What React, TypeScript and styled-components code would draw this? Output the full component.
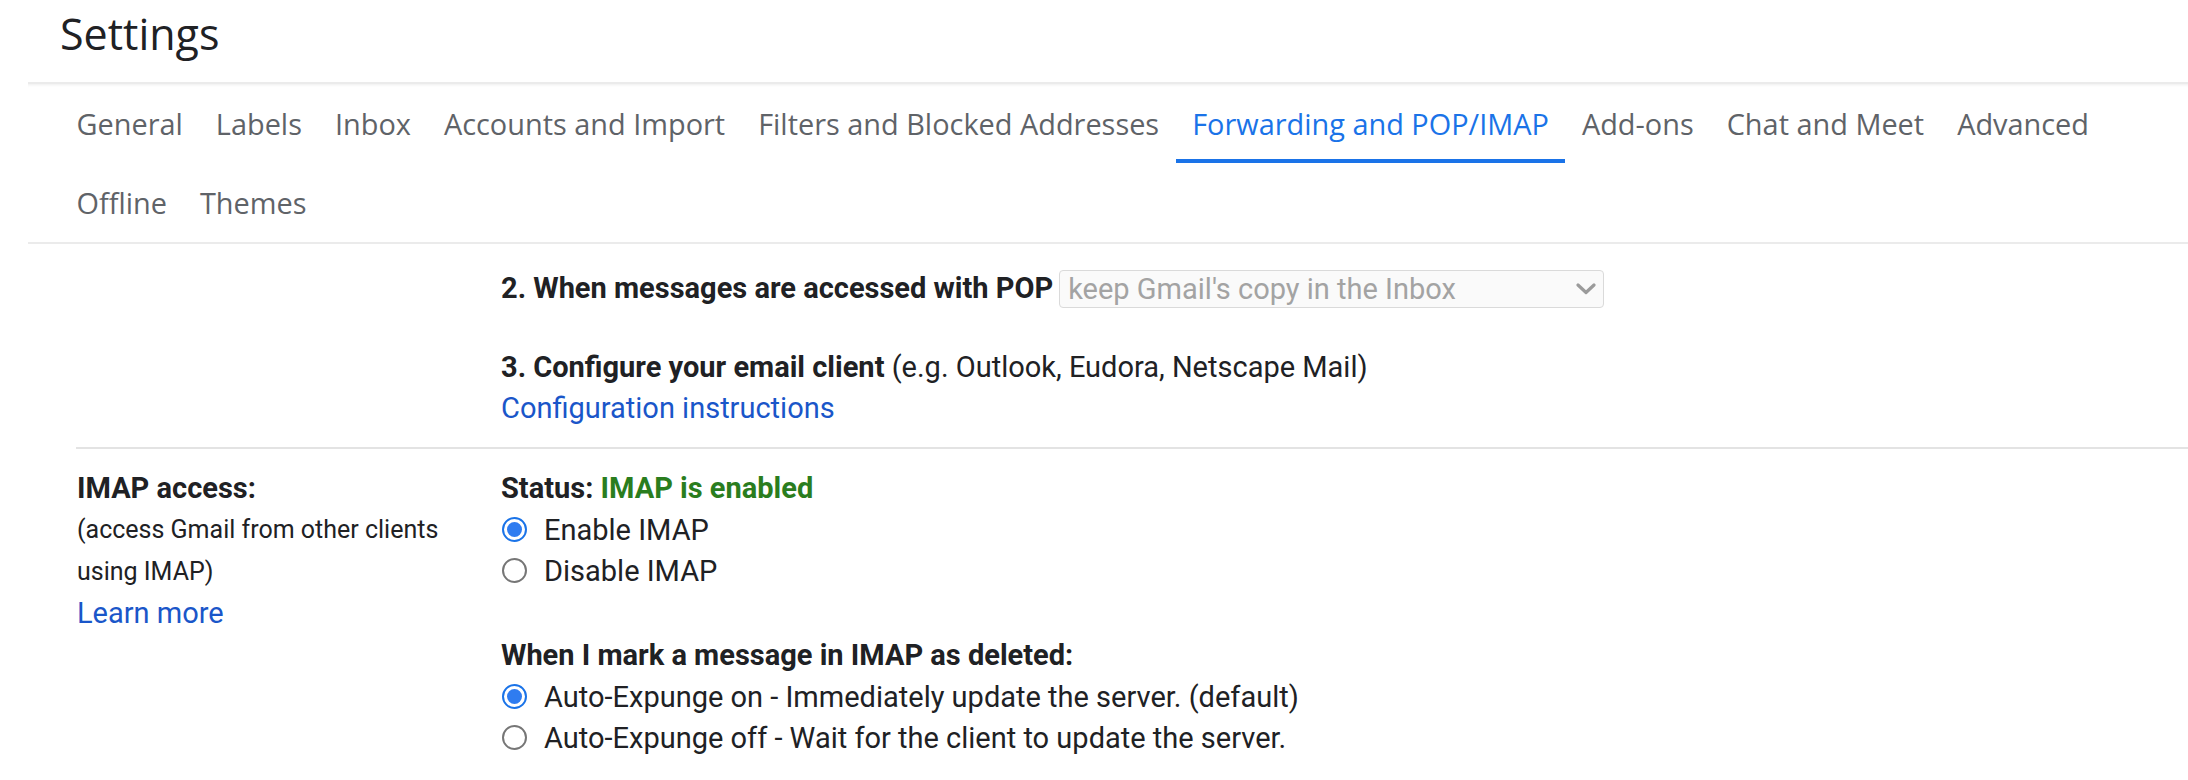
import React from "react";
import styled, { createGlobalStyle } from "styled-components";

const GlobalStyle = createGlobalStyle`
  html, body {
    margin: 0;
    padding: 0;
    background: #ffffff;
    font-family: Roboto, "Liberation Sans", Arial, sans-serif;
    color: #202124;
  }
  * { box-sizing: border-box; }
`;

const Page = styled.div`
  width: 2188px;
  height: 780px;
  overflow: hidden;
  background: #ffffff;
`;

const Header = styled.header`
  height: 82px;
  padding: 0 0 14px 60px;
  display: flex;
  align-items: center;
`;

const Title = styled.h1`
  margin: 0;
  font-family: "Open Sans", Roboto, sans-serif;
  font-weight: 400;
  font-size: 43px;
  line-height: 60px;
  color: #202124;
`;

const Main = styled.main`
  margin-left: 28px;
  border-top: 2px solid #ebebeb;
  box-shadow: inset 0 3px 3px -2px rgba(0, 0, 0, 0.07);
`;

const TabBar = styled.nav`
  display: flex;
  flex-wrap: wrap;
  padding-left: 32px;
  border-bottom: 2px solid #ebebeb;
`;

const Tab = styled.div<{ $active?: boolean }>`
  height: 79px;
  padding: 4px 16.5px 0;
  display: flex;
  align-items: center;
  font-family: "Open Sans", Roboto, sans-serif;
  font-size: 28.9px;
  line-height: 40px;
  white-space: nowrap;
  color: ${(p) => (p.$active ? "#1a73e8" : "#5f6368")};
  border-bottom: 4px solid ${(p) => (p.$active ? "#1a73e8" : "transparent")};
`;

const Content = styled.div`
  padding-left: 48px;
`;

const Section = styled.section<{ $divided?: boolean; $pt: number; $pb: number }>`
  display: grid;
  grid-template-columns: 425px 1fr;
  padding-top: ${(p) => p.$pt}px;
  padding-bottom: ${(p) => p.$pb}px;
  border-top: ${(p) => (p.$divided ? "2px solid #e3e3e3" : "none")};
`;

const LabelCol = styled.div`
  padding-left: 1px;
  padding-right: 24px;
  display: flex;
  flex-direction: column;
  align-items: flex-start;
`;

const BodyCol = styled.div`
  display: flex;
  flex-direction: column;
  align-items: flex-start;
`;

const Strong = styled.span`
  font-weight: 700;
  font-size: 29px;
  line-height: 41px;
  color: #202124;
`;

const Green = styled.span`
  font-weight: 700;
  color: #2a7d1e;
`;

const Line = styled.div<{ $mt?: number }>`
  font-size: 29px;
  line-height: 41px;
  color: #202124;
  white-space: nowrap;
  margin-top: ${(p) => p.$mt ?? 0}px;
`;

const SelectRow = styled.div`
  display: flex;
  align-items: center;
  height: 41px;
`;

const SelectBox = styled.div`
  margin-left: 6px;
  width: 545px;
  height: 38px;
  border: 1.5px solid #dadada;
  border-radius: 4px;
  background: #fafafa;
  display: flex;
  align-items: center;
  justify-content: space-between;
  padding: 0 7px 0 8px;
  font-size: 29px;
  color: #a3a3a3;
  white-space: nowrap;
`;

const Link = styled.a`
  font-size: 29px;
  line-height: 41px;
  color: #1a56c9;
  text-decoration: none;
  cursor: pointer;
`;

const Sub = styled.div`
  font-size: 25px;
  line-height: 42px;
  color: #202124;
  max-width: 400px;
`;

const RadioRow = styled.label`
  display: flex;
  align-items: center;
  height: 41px;
  font-size: 29px;
  color: #202124;
  white-space: nowrap;
  cursor: pointer;
`;

const RadioCircle = styled.span<{ $checked?: boolean }>`
  width: 25px;
  height: 25px;
  border-radius: 50%;
  margin-left: 1px;
  margin-right: 17px;
  flex: none;
  display: flex;
  align-items: center;
  justify-content: center;
  border: ${(p) => (p.$checked ? "2.5px solid #1a73e8" : "2px solid #767676")};
  background: #ffffff;
  &::after {
    content: "";
    width: 15px;
    height: 15px;
    border-radius: 50%;
    background: ${(p) => (p.$checked ? "#2f7cf0" : "transparent")};
  }
`;

const Group = styled.div<{ $mt: number }>`
  margin-top: ${(p) => p.$mt}px;
  display: flex;
  flex-direction: column;
`;

function Radio({ checked, children }: { checked?: boolean; children: React.ReactNode }) {
  return (
    <RadioRow>
      <RadioCircle $checked={checked} />
      {children}
    </RadioRow>
  );
}

function Chevron() {
  return (
    <svg width="20" height="12" viewBox="0 0 20 12" fill="none">
      <polyline
        points="2,2 10,9.5 18,2"
        stroke="#9b9b9b"
        strokeWidth="3.2"
        strokeLinecap="round"
        strokeLinejoin="round"
      />
    </svg>
  );
}

const tabs = [
  "General",
  "Labels",
  "Inbox",
  "Accounts and Import",
  "Filters and Blocked Addresses",
  "Forwarding and POP/IMAP",
  "Add-ons",
  "Chat and Meet",
  "Advanced",
  "Offline",
  "Themes",
];

export default function App() {
  return (
    <Page>
      <GlobalStyle />
      <Header>
        <Title>Settings</Title>
      </Header>
      <Main>
        <TabBar>
          {tabs.map((t) => (
            <Tab key={t} $active={t === "Forwarding and POP/IMAP"}>
              {t}
            </Tab>
          ))}
        </TabBar>
        <Content>
          <Section $pt={24} $pb={18}>
            <LabelCol />
            <BodyCol>
              <SelectRow>
                <Strong>2. When messages are accessed with POP</Strong>
                <SelectBox>
                  <span>keep Gmail's copy in the Inbox</span>
                  <Chevron />
                </SelectBox>
              </SelectRow>
              <Line $mt={38}>
                <Strong>3. Configure your email client</Strong> (e.g. Outlook, Eudora, Netscape Mail)
              </Line>
              <Link>Configuration instructions</Link>
            </BodyCol>
          </Section>
          <Section $divided $pt={19} $pb={0}>
            <LabelCol>
              <Strong>IMAP access:</Strong>
              <Sub>(access Gmail from other clients using IMAP)</Sub>
              <Link>Learn more</Link>
            </LabelCol>
            <BodyCol>
              <Line>
                <Strong>
                  Status: <Green>IMAP is enabled</Green>
                </Strong>
              </Line>
              <Radio checked>Enable IMAP</Radio>
              <Radio>Disable IMAP</Radio>
              <Group $mt={44}>
                <Strong>When I mark a message in IMAP as deleted:</Strong>
                <Radio checked>Auto-Expunge on - Immediately update the server. (default)</Radio>
                <Radio>Auto-Expunge off - Wait for the client to update the server.</Radio>
              </Group>
            </BodyCol>
          </Section>
        </Content>
      </Main>
    </Page>
  );
}
